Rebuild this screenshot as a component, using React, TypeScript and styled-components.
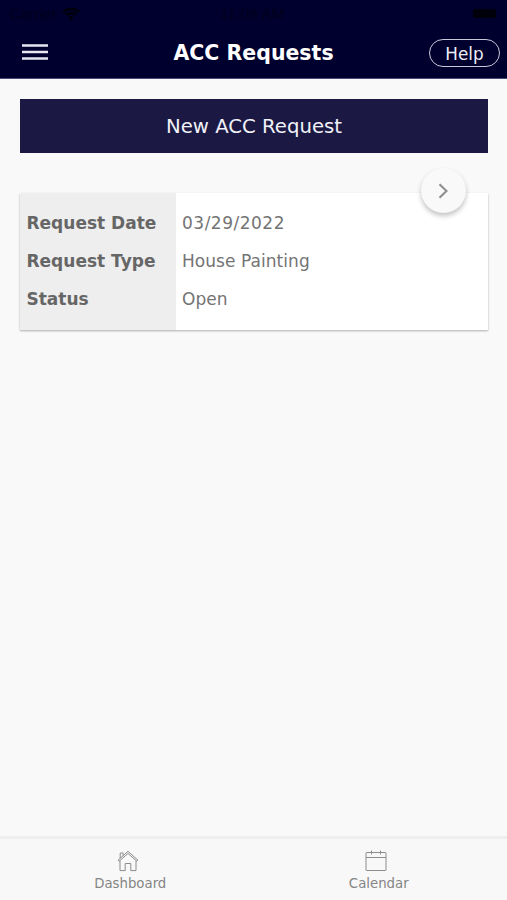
import { ReactNode } from 'react';
import styled, { createGlobalStyle } from 'styled-components';

type Field = {
  label: string;
  value: string;
  spacing?: number;
};

const fields: Field[] = [
  { label: 'Request Date', value: '03/29/2022', spacing: 0.5 },
  { label: 'Request Type', value: 'House Painting', spacing: 0.05 },
  { label: 'Status', value: 'Open' },
];

const MenuIcon = () => (
  <svg width="26" height="18" viewBox="0 0 26 18" stroke="#e6e6f4" strokeWidth="2.4">
    <path d="M0 2.5h26M0 9h26M0 15.5h26" />
  </svg>
);

const WifiIcon = () => (
  <svg width="18" height="14" viewBox="0 0 18 14" fill="#00000c">
    <path d="M9 13.5 6.2 10.4a4.2 4.2 0 0 1 5.6 0zM4.8 9 3 7a9 9 0 0 1 12 0l-1.8 2a6.4 6.4 0 0 0-8.4 0zM2 5.9.3 4a13 13 0 0 1 17.4 0L16 5.9a10.5 10.5 0 0 0-14 0z" />
  </svg>
);

const HomeIcon = () => (
  <svg width="22" height="22" viewBox="0 0 22 22" fill="none" stroke="#8c8c8c" strokeWidth="1">
    <path d="M1.1 10.1 11 1.3l9.9 8.8-1 1.1L11 3.5l-8.9 7.7z" />
    <path d="M3 10.6v10h5.2v-7.1h5.6v7.1H19v-10" />
    <path d="M3.2 8V3h2.9v2.5" />
  </svg>
);

const CalendarIcon = () => (
  <svg width="22" height="22" viewBox="0 0 22 22" fill="none" stroke="#8c8c8c" strokeWidth="1">
    <rect x="1" y="2.5" width="20" height="18" rx="0.5" />
    <path d="M1 7.5h20M6.5 0.5v4M15.5 0.5v4" />
  </svg>
);

type TabProps = {
  label: string;
  shift: number;
  children: ReactNode;
};

const Tab = ({ label, shift, children }: TabProps) => (
  <STab $shift={shift}>
    {children}
    <STabLabel>{label}</STabLabel>
  </STab>
);

export default function App() {
  return (
    <>
      <GlobalStyle />
      <SScreen>
        <SHeader>
          <SStatusBar>
            <SCarrier>
              Carrier
              <WifiIcon />
            </SCarrier>
            <span>11:08 AM</span>
            <SBattery />
          </SStatusBar>
          <SNavBar>
            <SMenuButton aria-label="Menu">
              <MenuIcon />
            </SMenuButton>
            <STitle>ACC Requests</STitle>
            <SHelpButton>Help</SHelpButton>
          </SNavBar>
        </SHeader>
        <SMain>
          <SNewButton>New ACC Request</SNewButton>
          <SCard>
            <SLabels>
              {fields.map((field) => (
                <SLabel key={field.label}>{field.label}</SLabel>
              ))}
            </SLabels>
            <SValues>
              {fields.map((field) => (
                <SValue key={field.label} $spacing={field.spacing}>
                  {field.value}
                </SValue>
              ))}
            </SValues>
            <SOpenButton aria-label="Open request">
              <svg width="12" height="18" viewBox="0 0 12 18" fill="none" stroke="#8f8f8f" strokeWidth="2.1">
                <path d="M1.5 2.2 8.5 9l-7 6.8" />
              </svg>
            </SOpenButton>
          </SCard>
        </SMain>
        <STabBar>
          <Tab label="Dashboard" shift={3}>
            <HomeIcon />
          </Tab>
          <Tab label="Calendar" shift={-2}>
            <CalendarIcon />
          </Tab>
        </STabBar>
      </SScreen>
    </>
  );
}

const GlobalStyle = createGlobalStyle`
  * {
    box-sizing: border-box;
  }

  body {
    margin: 0;
    font-family: 'DejaVu Sans', Verdana, sans-serif;
  }

  button {
    margin: 0;
    padding: 0;
    border: 0;
    background: none;
    font-family: inherit;
  }

  svg {
    display: block;
    flex: none;
  }
`;

const SScreen = styled.div`
  display: flex;
  flex-direction: column;
  width: 507px;
  height: 900px;
  background: #f9f9f9;
`;

const SHeader = styled.header`
  height: 79px;
  flex: none;
  background: #00002e;
  border-bottom: 1px solid #4c4c78;
`;

const SStatusBar = styled.div`
  display: grid;
  grid-template-columns: 1fr auto 1fr;
  align-items: center;
  height: 27px;
  padding: 0 11px 0 9px;
  color: #00001c;
  font-family: 'Liberation Sans', sans-serif;
  font-size: 15.5px;
`;

const SCarrier = styled.div`
  display: flex;
  align-items: center;
  gap: 6px;
`;

const SBattery = styled.div`
  justify-self: end;
  width: 23px;
  height: 9px;
  border-radius: 2px;
  background: #00000a;
`;

const SNavBar = styled.div`
  display: grid;
  grid-template-columns: 1fr auto 1fr;
  align-items: center;
  height: 51px;
  padding: 0 7px 0 22px;
`;

const SMenuButton = styled.button`
  width: 26px;
  margin-top: -2px;
`;

const STitle = styled.h1`
  margin: 0 15px 0 0;
  color: #fff;
  font-size: 20.5px;
  line-height: 24px;
`;

const SHelpButton = styled.button`
  justify-self: end;
  width: 71px;
  height: 28px;
  padding-top: 2px;
  border: 1.5px solid #c9c9dc;
  border-radius: 14px;
  color: #eeeef6;
  font-size: 16.8px;
  line-height: 22px;
`;

const SMain = styled.main`
  display: flex;
  flex: 1;
  flex-direction: column;
  gap: 40px;
  padding: 20px 19px 0 20px;
`;

const SNewButton = styled.button`
  height: 54px;
  background: #1b1944;
  color: #f1f1f8;
  font-size: 19.7px;
`;

const SCard = styled.section`
  position: relative;
  display: flex;
  height: 137px;
  background: #fff;
  box-shadow: 0 1px 2px rgba(0, 0, 0, 0.3);
`;

const SLabels = styled.div`
  width: 156px;
  padding: 11px 0 0 6.5px;
  background: #eeeeee;
`;

const SValues = styled.div`
  flex: 1;
  padding: 11px 0 0 6px;
`;

const SLabel = styled.div`
  color: #666;
  font-size: 17px;
  font-weight: bold;
  line-height: 38px;
  white-space: nowrap;
`;

const SValue = styled.div<{ $spacing?: number }>`
  color: #747474;
  font-size: 17px;
  letter-spacing: ${({ $spacing = 0 }) => $spacing}px;
  line-height: 38px;
`;

// カードの右上に重なる丸ボタン
const SOpenButton = styled.button`
  position: absolute;
  top: -25px;
  right: 22px;
  display: flex;
  align-items: center;
  justify-content: center;
  width: 45px;
  height: 45px;
  border-radius: 50%;
  background: #f9f9f9;
  box-shadow: 0 3px 5px rgba(0, 0, 0, 0.24);
`;

const STabBar = styled.nav`
  display: flex;
  flex: none;
  height: 64px;
  border-top: 3px solid #eeeeee;
  background: #f8f8f8;
`;

const STab = styled.div<{ $shift: number }>`
  display: flex;
  flex: 1 0 0;
  flex-direction: column;
  align-items: center;
  padding-top: 11px;
  padding-left: ${({ $shift }) => Math.max($shift * 2, 0)}px;
  padding-right: ${({ $shift }) => Math.max($shift * -2, 0)}px;

  svg {
    margin-right: 5px;
  }
`;

const STabLabel = styled.span`
  margin-top: 3px;
  color: #858585;
  font-size: 13.3px;
  line-height: 18px;
`;
